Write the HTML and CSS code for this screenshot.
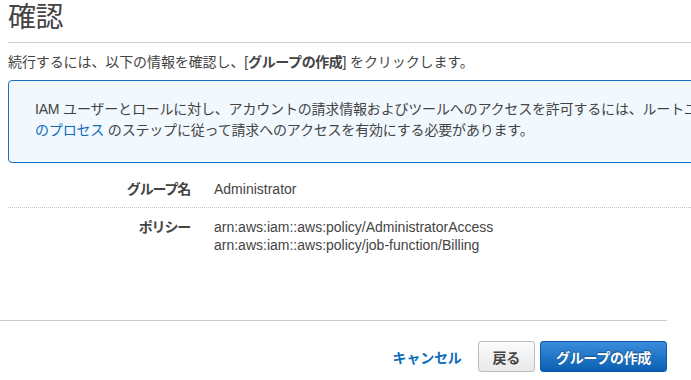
FILE: index.html
```html
<!DOCTYPE html>
<html lang="ja">
<head>
  <meta charset="UTF-8" />
  <meta name="viewport" content="width=device-width, initial-scale=1.0"/>
  <title>確認</title>
  <link rel="stylesheet" href="styles.css">
</head>
<body>
  <div class="page">
    <div class="content">
      <h1 class="title">確認</h1>
      <p class="lead">続行するには、以下の情報を確認し、[<strong>グループの作成</strong>] をクリックします。</p>

      <div class="info-box">
        <p>IAM ユーザーとロールに対し、アカウントの請求情報およびツールへのアクセスを許可するには、ルートユーザーとして <a href="#">IAM アクセスのアクティブ化</a><br><a href="#">のプロセス</a> のステップに従って請求へのアクセスを有効にする必要があります。</p>
      </div>

      <div class="review">
        <div class="review-row">
          <div class="review-label">グループ名</div>
          <div class="review-value">Administrator</div>
        </div>
        <div class="review-row">
          <div class="review-label">ポリシー</div>
          <div class="review-value">
            arn:aws:iam::aws:policy/AdministratorAccess<br>
            arn:aws:iam::aws:policy/job-function/Billing
          </div>
        </div>
      </div>
    </div>

    <div class="footer">
      <a href="#" class="cancel">キャンセル</a>
      <button class="btn btn-back">戻る</button>
      <button class="btn btn-primary">グループの作成</button>
    </div>
  </div>
</body>
</html>
```

FILE: styles.css
```css
* { box-sizing: border-box; margin: 0; padding: 0; }
html, body {
  font-family: 'Liberation Sans', 'Noto Sans CJK JP', sans-serif;
  font-size: 14px;
  color: #444;
  background: #fff;
  overflow: hidden;
}
a { color: #0f6db8; text-decoration: none; }

.page {
  width: 691px;
  height: 380px;
  overflow: hidden;
}
.content {
  padding-left: 8px;
  margin-right: -60px;
}
.title {
  font-size: 28px;
  font-weight: normal;
  line-height: 34px;
  margin-top: 1px;
  padding-bottom: 7px;
  border-bottom: 1px solid #ccc;
  letter-spacing: -0.5px;
}
.lead {
  line-height: 20px;
  margin-top: 9px;
  letter-spacing: -0.1px;
}
.lead strong { letter-spacing: -0.4px; }

.info-box {
  margin-top: 8px;
  background: #f1f8fe;
  border: 1px solid #1a6fbd;
  border-radius: 4px;
  padding: 18px 20px 21px 26px;
}
.info-box p {
  line-height: 21px;
  white-space: nowrap;
  letter-spacing: -0.18px;
}

.review { margin-top: 7px; }
.review-row {
  display: grid;
  grid-template-columns: 182px 1fr;
  column-gap: 24px;
  padding: 10px 0 9px;
  line-height: 18px;
}
.review-row + .review-row {
  border-top: 1px dotted #c4c4c4;
}
.review-label {
  text-align: right;
  font-weight: bold;
  letter-spacing: -1.2px;
}

.footer {
  width: 667px;
  margin-top: 57px;
  border-top: 1px solid #ccc;
  padding-top: 20px;
  display: flex;
  justify-content: flex-end;
  align-items: center;
}
.cancel {
  font-weight: bold;
  margin-right: 16px;
  letter-spacing: -0.2px;
}
.btn {
  font-family: inherit;
  font-size: 14px;
  font-weight: bold;
  height: 31px;
  padding: 0 14px;
  border-radius: 3px;
  cursor: pointer;
  letter-spacing: -0.3px;
}
.btn-back {
  color: #444;
  background: linear-gradient(#fbfbfb, #e9e9e9);
  border: 1px solid #bdbdbd;
  margin-right: 5px;
}
.btn-primary {
  color: #fff;
  background: linear-gradient(#3a8ddc, #0a5fb2);
  border: 1px solid #0b58a6;
  text-shadow: 0 -1px 1px rgba(0, 0, 0, 0.35);
  min-width: 127px;
}
```
